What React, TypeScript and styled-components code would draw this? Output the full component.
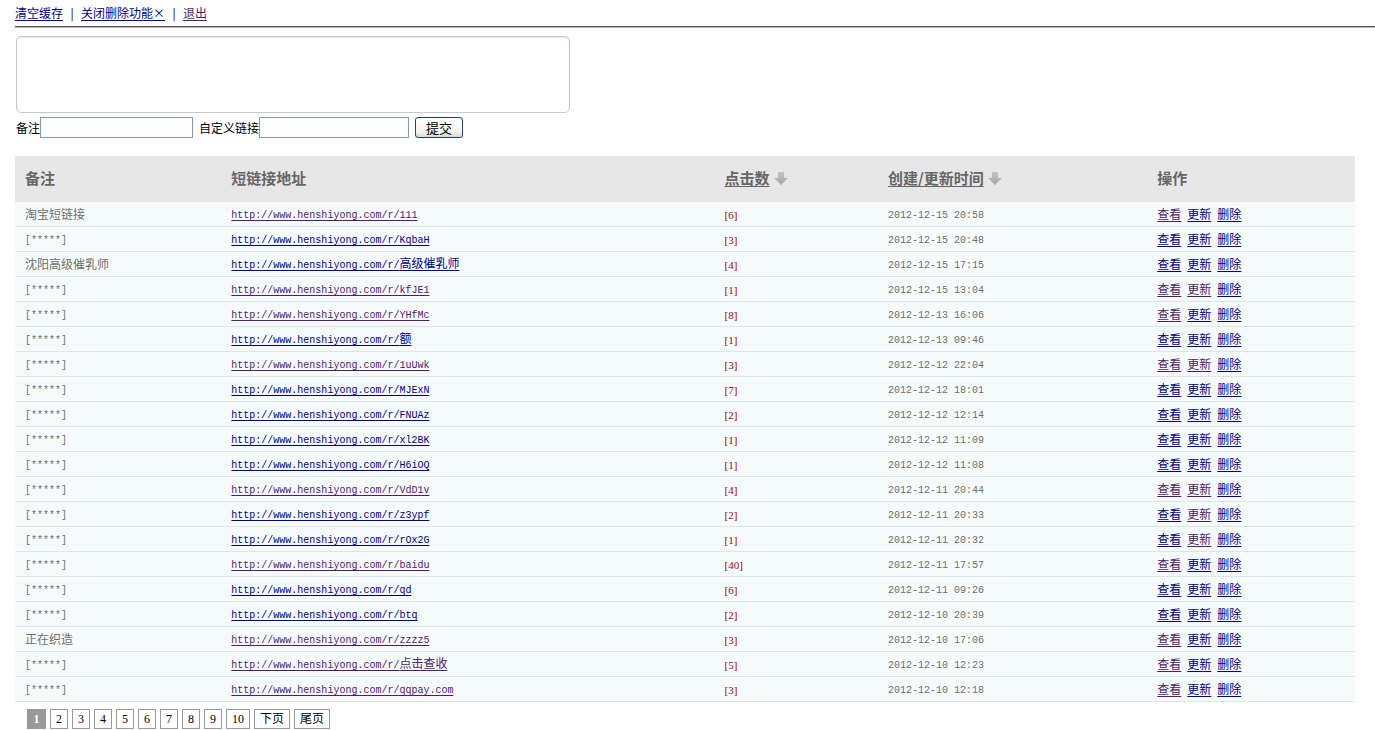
import React from "react";
import styled, { createGlobalStyle, css } from "styled-components";

const CJK = '"Noto Sans CJK SC", sans-serif';
const MONO = '"Liberation Mono", "Noto Sans CJK SC", monospace';
const SERIF = '"Liberation Serif", "Noto Sans CJK SC", serif';

const GlobalStyle = createGlobalStyle`
  *, *::before, *::after { box-sizing: border-box; }
  body {
    margin: 0;
    background: #fff;
    color: #000;
    font-family: ${CJK};
    font-size: 12px;
    line-height: 16px;
  }
`;

const Page = styled.div`
  padding-left: 15px;
`;

const TopBar = styled.nav`
  display: flex;
  gap: 6px;
  padding: 5px 0;
  border-bottom: 1px solid #555;
  box-shadow: 0 1px 0 #b4b4b4;
`;

const Separator = styled.span`
  width: 6px;
  text-align: center;
`;

const Link = styled.a<{ $visited?: boolean }>`
  color: ${(p) => (p.$visited ? "#501c6c" : "#00008c")};
  text-decoration: underline;
  text-decoration-thickness: 1px;
  text-decoration-skip-ink: none;
  text-underline-offset: 2px;
`;

const Main = styled.main`
  margin-right: 20px;
`;

const Form = styled.form`
  padding: 9px 1px 0;
`;

const UrlBox = styled.textarea`
  display: block;
  width: 554px;
  max-width: 100%;
  height: 77px;
  padding: 4px;
  border: 1px solid #c8c8c8;
  border-radius: 5px;
  box-shadow: inset 0 1px 2px #e4e4e4;
  resize: none;
  outline: none;
`;

const FormRow = styled.div`
  display: flex;
  align-items: center;
  gap: 6px;
  margin-top: 4px;
`;

const Field = styled.label`
  display: flex;
  align-items: center;
`;

const TextInput = styled.input`
  width: 150px;
  height: 21px;
  padding: 1px 3px;
  border: 1px solid #7f9db0;
  outline: none;
  font: inherit;
`;

const NoteInput = styled(TextInput)`
  width: 153px;
`;

const Submit = styled.button`
  width: 48px;
  height: 21px;
  padding: 0;
  border: 1px solid #1c4468;
  border-radius: 3px;
  background: linear-gradient(#fff, #f3f3ee 70%, #dcdad2);
  color: #000;
  font-family: ${CJK};
  font-size: 13px;
  line-height: 18px;
`;

const Table = styled.table`
  width: 100%;
  margin-top: 18px;
  border-collapse: separate;
  border-spacing: 0;
  table-layout: fixed;
`;

const Col = styled.col<{ $share: string }>`
  width: ${(p) => p.$share};
`;

const Th = styled.th`
  height: 46px;
  padding: 0 10px 2px;
  background: #e7e7e7;
  color: #666;
  font-size: 15px;
  font-weight: 700;
  line-height: 20px;
  text-align: left;
`;

const SortLink = styled.a`
  display: flex;
  align-items: center;
  gap: 4px;
  color: inherit;
  text-decoration: none;
`;

const SortText = styled.span`
  text-decoration: underline;
  text-decoration-thickness: 1px;
  text-decoration-skip-ink: none;
  text-underline-offset: 2px;
`;

const Td = styled.td`
  height: 25px;
  padding: 0 10px;
  border-bottom: 1px solid #dfe5e5;
  background: #f5fbfb;
  color: #6f6f6b;
  line-height: 16px;
  white-space: nowrap;
`;

const Mono = styled.span`
  font-family: ${MONO};
  font-size: 10px;
`;

const UrlLink = styled(Link)`
  font-family: ${MONO};
  font-size: 10px;
`;

const Wide = styled.span`
  font-family: ${CJK};
  font-size: 12px;
`;

const Count = styled.span`
  color: #a80000;
  font-family: ${SERIF};
  font-size: 11px;
`;

const Actions = styled.div`
  display: flex;
  gap: 6px;
`;

const Pager = styled.nav`
  display: flex;
  gap: 4px;
  padding: 7px 12px 0;
`;

const pageBox = css`
  height: 20px;
  padding: 0 5px;
  border: 1px solid #999;
  font-family: ${SERIF};
  font-size: 12px;
  line-height: 18px;
`;

const PageLink = styled.a`
  ${pageBox}
  color: #000;
  text-decoration: none;
`;

const CurrentPage = styled.span`
  ${pageBox}
  min-width: 19px;
  background: #999;
  color: #fff;
  font-weight: 700;
  text-align: center;
`;

type Row = {
  note?: string;
  path: string;
  wide?: string;
  seen?: boolean;
  clicks: number;
  time: string;
  viewed?: boolean;
  updated?: boolean;
};

const rows: Row[] = [
  { note: "淘宝短链接", path: "111", seen: true, clicks: 6, time: "2012-12-15 20:58", viewed: true },
  { path: "KqbaH", clicks: 3, time: "2012-12-15 20:48" },
  { note: "沈阳高级催乳师", path: "", wide: "高级催乳师", clicks: 4, time: "2012-12-15 17:15" },
  { path: "kfJE1", seen: true, clicks: 1, time: "2012-12-15 13:04", viewed: true, updated: true },
  { path: "YHfMc", seen: true, clicks: 8, time: "2012-12-13 16:06", viewed: true },
  { path: "", wide: "额", clicks: 1, time: "2012-12-13 09:46" },
  { path: "1uUwk", seen: true, clicks: 3, time: "2012-12-12 22:04", viewed: true, updated: true },
  { path: "MJExN", clicks: 7, time: "2012-12-12 18:01" },
  { path: "FNUAz", clicks: 2, time: "2012-12-12 12:14" },
  { path: "xl2BK", clicks: 1, time: "2012-12-12 11:09" },
  { path: "H6iOQ", clicks: 1, time: "2012-12-12 11:08" },
  { path: "VdD1v", seen: true, clicks: 4, time: "2012-12-11 20:44", viewed: true, updated: true },
  { path: "z3ypf", clicks: 2, time: "2012-12-11 20:33", updated: true },
  { path: "rOx2G", clicks: 1, time: "2012-12-11 20:32", updated: true },
  { path: "baidu", seen: true, clicks: 40, time: "2012-12-11 17:57", viewed: true },
  { path: "qd", clicks: 6, time: "2012-12-11 09:26" },
  { path: "btq", clicks: 2, time: "2012-12-10 20:39" },
  { note: "正在织造", path: "zzzz5", seen: true, clicks: 3, time: "2012-12-10 17:06", viewed: true },
  { path: "", wide: "点击查收", seen: true, clicks: 5, time: "2012-12-10 12:23", viewed: true },
  { path: "qqpay.com", seen: true, clicks: 3, time: "2012-12-10 12:18", viewed: true },
];

const pages = ["2", "3", "4", "5", "6", "7", "8", "9", "10", "下页", "尾页"];

const DownArrow = () => (
  <svg width="14" height="14" viewBox="0 0 14 14" aria-hidden="true">
    <defs>
      <linearGradient id="arrowFill" x1="0" y1="0" x2="0" y2="1">
        <stop offset="0" stopColor="#c4c4c4" />
        <stop offset="1" stopColor="#a6a6a6" />
      </linearGradient>
    </defs>
    <path d="M4 1h6v6h4L7 14 0 7h4z" fill="url(#arrowFill)" />
  </svg>
);

export default function App() {
  return (
    <Page>
      <GlobalStyle />
      <TopBar>
        <Link href="#clear">清空缓存</Link>
        <Separator>|</Separator>
        <Link href="#toggle">关闭删除功能×</Link>
        <Separator>|</Separator>
        <Link href="#logout" $visited>退出</Link>
      </TopBar>
      <Main>
        <Form onSubmit={(e) => e.preventDefault()}>
          <UrlBox aria-label="链接" />
          <FormRow>
            <Field>备注<NoteInput type="text" /></Field>
            <Field>自定义链接<TextInput type="text" /></Field>
            <Submit type="submit">提交</Submit>
          </FormRow>
        </Form>
        <Table>
          <colgroup>
            <Col $share="15.4%" />
            <Col $share="36.8%" />
            <Col $share="12.2%" />
            <Col $share="20.1%" />
            <Col $share="15.5%" />
          </colgroup>
          <thead>
            <tr>
              <Th>备注</Th>
              <Th>短链接地址</Th>
              <Th><SortLink href="#clicks"><SortText>点击数</SortText><DownArrow /></SortLink></Th>
              <Th><SortLink href="#time"><SortText>创建/更新时间</SortText><DownArrow /></SortLink></Th>
              <Th>操作</Th>
            </tr>
          </thead>
          <tbody>
            {rows.map((r) => (
              <tr key={r.time}>
                <Td>{r.note ?? <Mono>[*****]</Mono>}</Td>
                <Td>
                  <UrlLink href={`#${r.path}${r.wide ?? ""}`} $visited={r.seen}>
                    {`http://www.henshiyong.com/r/${r.path}`}
                    {r.wide && <Wide>{r.wide}</Wide>}
                  </UrlLink>
                </Td>
                <Td><Count>{`[${r.clicks}]`}</Count></Td>
                <Td><Mono>{r.time}</Mono></Td>
                <Td>
                  <Actions>
                    <Link href="#view" $visited={r.viewed}>查看</Link>
                    <Link href="#update" $visited={r.updated}>更新</Link>
                    <Link href="#delete">删除</Link>
                  </Actions>
                </Td>
              </tr>
            ))}
          </tbody>
        </Table>
        <Pager aria-label="分页">
          <CurrentPage aria-current="page">1</CurrentPage>
          {pages.map((p) => (
            <PageLink key={p} href={`#page-${p}`}>{p}</PageLink>
          ))}
        </Pager>
      </Main>
    </Page>
  );
}
